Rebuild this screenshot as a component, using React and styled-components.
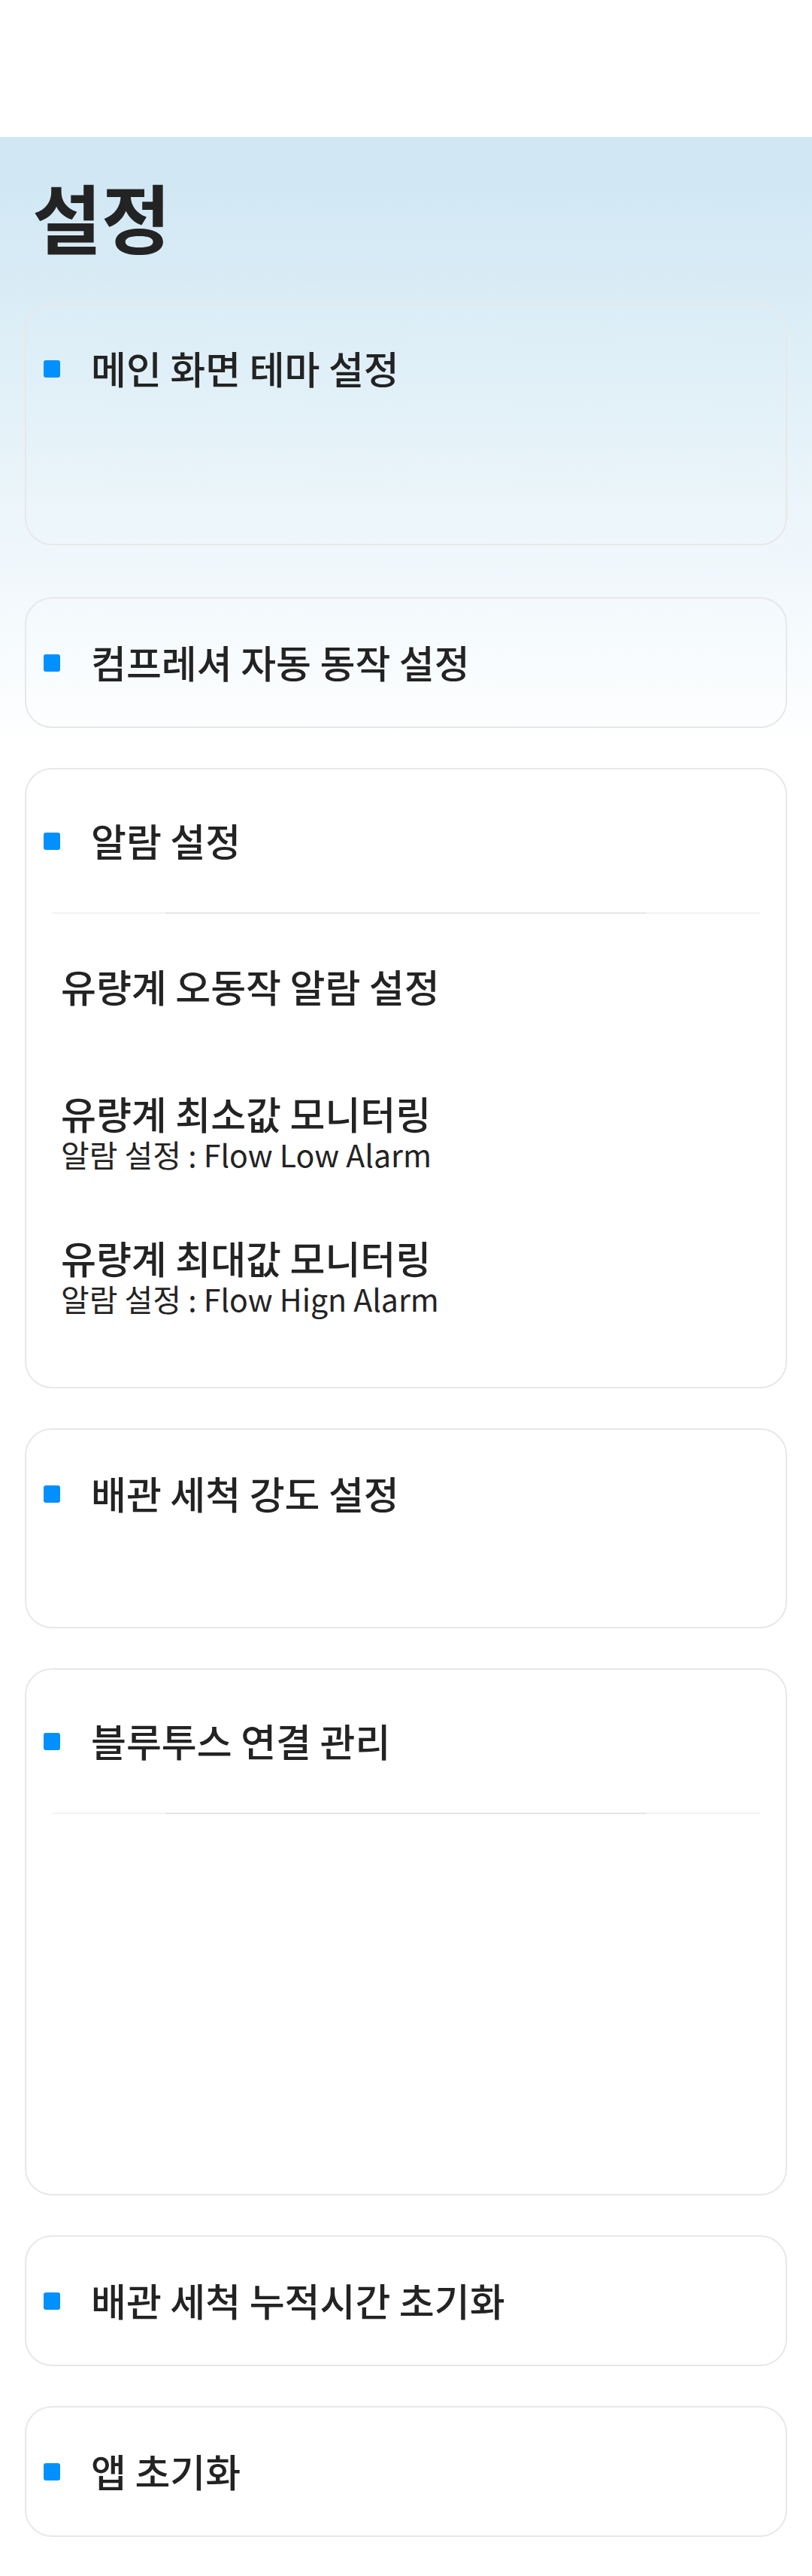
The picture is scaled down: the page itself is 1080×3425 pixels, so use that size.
import React from "react";
import styled, { createGlobalStyle } from "styled-components";

const GlobalStyle = createGlobalStyle`
	body {
		margin: 0;
		background: #fff;
		font-family: "Noto Sans CJK KR", "Noto Sans", sans-serif;
		color: #232323;
	}
`;

const Page = styled("div")`
	width: 1080px;
	min-height: 3425px;
	display: flex;
	flex-direction: column;
	background-color: #fff;
`;

const TopBar = styled("div")`
	height: 182px;
	flex-shrink: 0;
	background-color: #fff;
`;

const Main = styled("main")`
	flex: 1;
	padding: 45px 33px 52px;
	background: linear-gradient(180deg, #d1e8f4 0px, #d1e8f4 67px, #ffffff 812px, #ffffff 100%);
`;

const PageTitle = styled("h1")`
	margin: 0 0 56px 10px;
	font-size: 100px;
	font-weight: 700;
	line-height: 120px;
	color: #232323;
`;

const CardList = styled("div")`
	display: flex;
	flex-direction: column;
	gap: 53px;
`;

const Card = styled("section")`
	border: 2px solid #e8e8e8;
	border-radius: 36px;
	background-color: transparent;
	margin-bottom: ${(p) => (p.$spaced ? "16px" : "0")};
	padding-bottom: ${(p) => p.$padBottom || 0}px;
`;

const CardHeader = styled("div")`
	display: flex;
	align-items: center;
	gap: 41px;
	height: ${(p) => (p.$tall ? "190px" : "170px")};
	padding-left: 23px;
`;

const Bullet = styled("span")`
	width: 22px;
	height: 23px;
	border-radius: 3px;
	background-color: #0090ff;
	flex-shrink: 0;
`;

const CardTitle = styled("h2")`
	margin: 0;
	font-size: 51px;
	font-weight: 500;
	line-height: 1.45;
	color: #232323;
`;

const Divider = styled("div")`
	height: 2px;
	margin: 0 34px;
	background: linear-gradient(90deg, #f3f3f3 0%, #f3f3f3 16%, #e6e6e6 16%, #e6e6e6 84%, #f3f3f3 84%, #f3f3f3 100%);
`;

const CardBody = styled("div")`
	height: ${(p) => p.$h}px;
`;

const AlarmItem = styled("div")`
	height: 192px;
	display: flex;
	flex-direction: column;
	justify-content: center;
	padding-left: 46px;
`;

const ItemTitle = styled("div")`
	font-size: 51px;
	font-weight: 500;
	line-height: 1.22;
	color: #232323;
`;

const ItemSub = styled("div")`
	font-size: 41px;
	font-weight: 400;
	line-height: 1.1;
	color: #232323;
`;

const alarms = [
	{ title: "유량계 오동작 알람 설정" },
	{ title: "유량계 최소값 모니터링", sub: "알람 설정 : Flow Low Alarm" },
	{ title: "유량계 최대값 모니터링", sub: "알람 설정 : Flow Hign Alarm" },
];

const Header = ({ title, tall }) => (
	<CardHeader $tall={tall}>
		<Bullet />
		<CardTitle>{title}</CardTitle>
	</CardHeader>
);

const App = () => {
	return (
		<Page>
			<GlobalStyle />
			<TopBar />
			<Main>
				<PageTitle>설정</PageTitle>
				<CardList>
					<Card $spaced>
						<Header title="메인 화면 테마 설정" />
						<CardBody $h={148} />
					</Card>
					<Card>
						<Header title="컴프레셔 자동 동작 설정" />
					</Card>
					<Card $padBottom={53}>
						<Header title="알람 설정" tall />
						<Divider />
						{alarms.map((a) => (
							<AlarmItem key={a.title}>
								<ItemTitle>{a.title}</ItemTitle>
								{a.sub && <ItemSub>{a.sub}</ItemSub>}
							</AlarmItem>
						))}
					</Card>
					<Card>
						<Header title="배관 세척 강도 설정" />
						<CardBody $h={92} />
					</Card>
					<Card>
						<Header title="블루투스 연결 관리" tall />
						<Divider />
						<CardBody $h={505} />
					</Card>
					<Card>
						<Header title="배관 세척 누적시간 초기화" />
					</Card>
					<Card>
						<Header title="앱 초기화" />
					</Card>
				</CardList>
			</Main>
		</Page>
	);
};

export default App;
